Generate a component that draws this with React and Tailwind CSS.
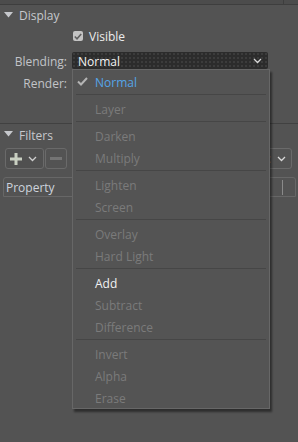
const items = [
  { label: 'Normal', state: 'checked' },
  'sep',
  { label: 'Layer' },
  'sep',
  { label: 'Darken' },
  { label: 'Multiply' },
  'sep',
  { label: 'Lighten' },
  { label: 'Screen' },
  'sep',
  { label: 'Overlay' },
  { label: 'Hard Light' },
  'sep',
  { label: 'Add', state: 'active' },
  { label: 'Subtract' },
  { label: 'Difference' },
  'sep',
  { label: 'Invert' },
  { label: 'Alpha' },
  { label: 'Erase' },
];

function Triangle() {
  return (
    <svg width="9" height="6" viewBox="0 0 9 6" className="shrink-0">
      <polygon points="0,0 9,0 4.5,5.5" fill="#c6c8cc" />
    </svg>
  );
}

function Chevron({ color = '#d8d8d8' }) {
  return (
    <svg width="9" height="6" viewBox="0 0 9 6">
      <polyline points="1,1 4.5,4.5 8,1" fill="none" stroke={color} strokeWidth="1.3" />
    </svg>
  );
}

function BlendMenu() {
  return (
    <div className="absolute left-[72px] top-[69px] w-[198px] h-[340px] bg-[#545454] border border-[#676767] shadow-[2px_3px_2px_rgba(0,0,0,0.45)] flex flex-col">
      {items.map((it, i) =>
        it === 'sep' ? (
          <div key={i} className="h-[5px] flex items-center px-[3px]">
            <div className="h-px w-full bg-[#464646]" />
          </div>
        ) : (
          <div key={i} className="h-[22px] shrink-0 flex items-center relative pl-[22px]">
            {it.state === 'checked' && (
              <svg width="11" height="9" viewBox="0 0 11 9" className="absolute left-[4px] top-[7px]">
                <polyline points="1,4.5 4,7.5 10,1" fill="none" stroke="#b4b4b4" strokeWidth="2" />
              </svg>
            )}
            <span
              className={
                'relative top-[1.5px] ' +
                (it.state === 'checked'
                  ? 'text-[#55a5e8]'
                  : it.state === 'active'
                  ? 'text-[#f2f2f2]'
                  : 'text-[#7b7b7b]')
              }
            >
              {it.label}
            </span>
          </div>
        )
      )}
    </div>
  );
}

export default function App() {
  return (
    <div className="relative w-[298px] h-[442px] overflow-hidden bg-[#535353] text-[12px] leading-none font-['Open_Sans',sans-serif] text-[#c4c6ca]">
      {/* top strip */}
      <div className="h-[5px] bg-[#4c4c4c] border-b border-[#3e3e3e] flex">
        <div className="w-[283px]" />
        <div className="w-px bg-[#3e3e3e]" />
      </div>

      {/* Display header */}
      <div className="h-[20px] flex items-center gap-[6px] pl-[4px]">
        <Triangle />
        <span className="relative top-[1px] text-[#c6c8cc]">Display</span>
      </div>

      {/* Visible */}
      <div className="h-[22px] flex items-center pl-[73px] gap-[6px]">
        <div className="w-[10px] h-[10px] rounded-[2px] bg-[#c4c4c4] flex items-center justify-center">
          <svg width="8" height="7" viewBox="0 0 8 7">
            <polyline points="0.8,3.5 3,5.8 7.2,1" fill="none" stroke="#606060" strokeWidth="1.6" />
          </svg>
        </div>
        <span className="relative top-[1px] text-[#ececec]">Visible</span>
      </div>

      {/* Blending */}
      <div className="mt-[5px] h-[17px] flex items-center">
        <span className="relative top-[1px] w-[67px] text-right text-[#c2c4c8]">Blending:</span>
        <div className="ml-[5px] w-[196px] h-[17px] rounded-[2px] bg-[#2c2c2c] bg-[radial-gradient(#3c3c3c_0.8px,transparent_0.9px)] bg-[length:4px_4px] flex items-center justify-between pl-[6px] pr-[6px]">
          <span className="relative top-[1px] text-[#f4f4f4]">Normal</span>
          <Chevron />
        </div>
      </div>

      {/* Render */}
      <div className="mt-[2px] h-[22px] flex items-center">
        <span className="relative top-[1.5px] w-[67px] text-right text-[#c2c4c8]">Render:</span>
      </div>

      {/* separator */}
      <div className="mt-[30px] h-px bg-[#414141]" />

      {/* Filters header */}
      <div className="h-[18px] mt-[1px] flex items-center gap-[6px] pl-[4px]">
        <Triangle />
        <span className="relative top-[1.5px] text-[#c6c8cc]">Filters</span>
      </div>

      {/* Filter buttons row */}
      <div className="mt-[5px] h-[21px] flex items-stretch pl-[5px] pr-[6px]">
        <div className="w-[39px] rounded-[3px] border border-[#6a6a6a] bg-[#505050] flex items-center pl-[4px] gap-[6px]">
          <svg width="12" height="12" viewBox="0 0 12 12">
            <rect x="4.5" y="0" width="3" height="12" fill="#c9d0c2" />
            <rect x="0" y="4.5" width="12" height="3" fill="#c9d0c2" />
          </svg>
          <Chevron color="#cfcfcf" />
        </div>
        <div className="ml-px w-[22px] rounded-[3px] border border-[#6a6a6a] flex items-center justify-center">
          <div className="w-[12px] h-[3px] bg-[#747474]" />
        </div>
        <div className="flex-1" />
        <div className="w-[80px] rounded-[3px] border border-[#6a6a6a] flex items-center justify-end pr-[5px] gap-[6px]">
          <span className="text-[#cfcfcf]">:</span>
          <Chevron />
        </div>
      </div>

      {/* Property table header */}
      <div className="mt-[8px] ml-[3px] mr-[2px] h-[20px] border border-[#676767] rounded-t-[3px] flex items-center">
        <span className="relative top-[1px] pl-[2px] text-[#cdd3dd] flex-1">Property</span>
        <div className="w-px h-[15px] bg-[#8a8a8a] mr-[12px]" />
      </div>

      <BlendMenu />
    </div>
  );
}
